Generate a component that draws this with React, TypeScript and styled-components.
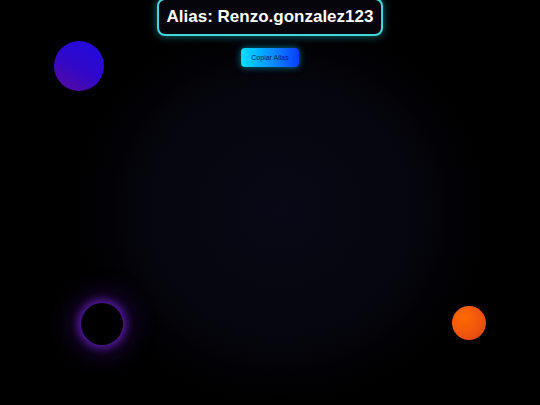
import React from "react";
import styled, { createGlobalStyle } from "styled-components";

const GlobalStyle = createGlobalStyle`
  html, body {
    margin: 0;
    padding: 0;
    background: #000;
  }
  #root {
    min-height: 100vh;
  }
`;

const Page = styled.div`
  position: relative;
  width: 540px;
  height: 405px;
  overflow: hidden;
  display: flex;
  flex-direction: column;
  align-items: center;
  font-family: "Liberation Sans", Arial, sans-serif;
  background:
    radial-gradient(ellipse 38% 48% at 52% 52%, #080816 0%, #06060f 60%, rgba(0, 0, 0, 0) 100%),
    #000;
`;

const AliasBox = styled.div`
  margin-top: -2px;
  padding: 5px 8px 5px;
  border: 2px solid #45d6dc;
  border-radius: 8px;
  background: #05050b;
  box-shadow: 0 0 8px rgba(40, 200, 220, 0.55);
  color: #fff;
  font-size: 17px;
  font-weight: 700;
  line-height: 24px;
  white-space: nowrap;
`;

const CopyButton = styled.button`
  margin-top: 12px;
  width: 58px;
  height: 19px;
  padding: 0;
  border: none;
  border-radius: 4px;
  background: linear-gradient(90deg, #00e0ff 0%, #0a8cff 55%, #0a3cff 100%);
  box-shadow: 0 0 7px rgba(0, 200, 255, 0.6);
  color: #0a1c5c;
  font-family: "Liberation Sans", Arial, sans-serif;
  font-size: 7px;
  cursor: pointer;
`;

const Orb = styled.div<{ $x: number; $y: number; $r: number; $bg: string; $glow?: string }>`
  position: absolute;
  left: ${(p) => p.$x - p.$r}px;
  top: ${(p) => p.$y - p.$r}px;
  width: ${(p) => p.$r * 2}px;
  height: ${(p) => p.$r * 2}px;
  border-radius: 50%;
  background: ${(p) => p.$bg};
  box-shadow: ${(p) => p.$glow || "none"};
`;

export default function App() {
  return (
    <>
      <GlobalStyle />
      <Page>
        <AliasBox>Alias: Renzo.gonzalez123</AliasBox>
        <CopyButton>Copiar Alias</CopyButton>
        <Orb
          $x={79}
          $y={66}
          $r={25}
          $bg="linear-gradient(30deg, #5c0a96 0%, #3208c8 45%, #1e0ae0 100%)"
        />
        <Orb
          $x={102}
          $y={324}
          $r={21}
          $bg="#000"
          $glow="0 0 8px 3px rgba(120, 35, 220, 0.7), 0 0 24px 10px rgba(80, 20, 170, 0.35)"
        />
        <Orb
          $x={469}
          $y={323}
          $r={17}
          $bg="radial-gradient(circle at 35% 35%, #ff6a00 0%, #ee5210 60%, #d03c18 100%)"
        />
      </Page>
    </>
  );
}
